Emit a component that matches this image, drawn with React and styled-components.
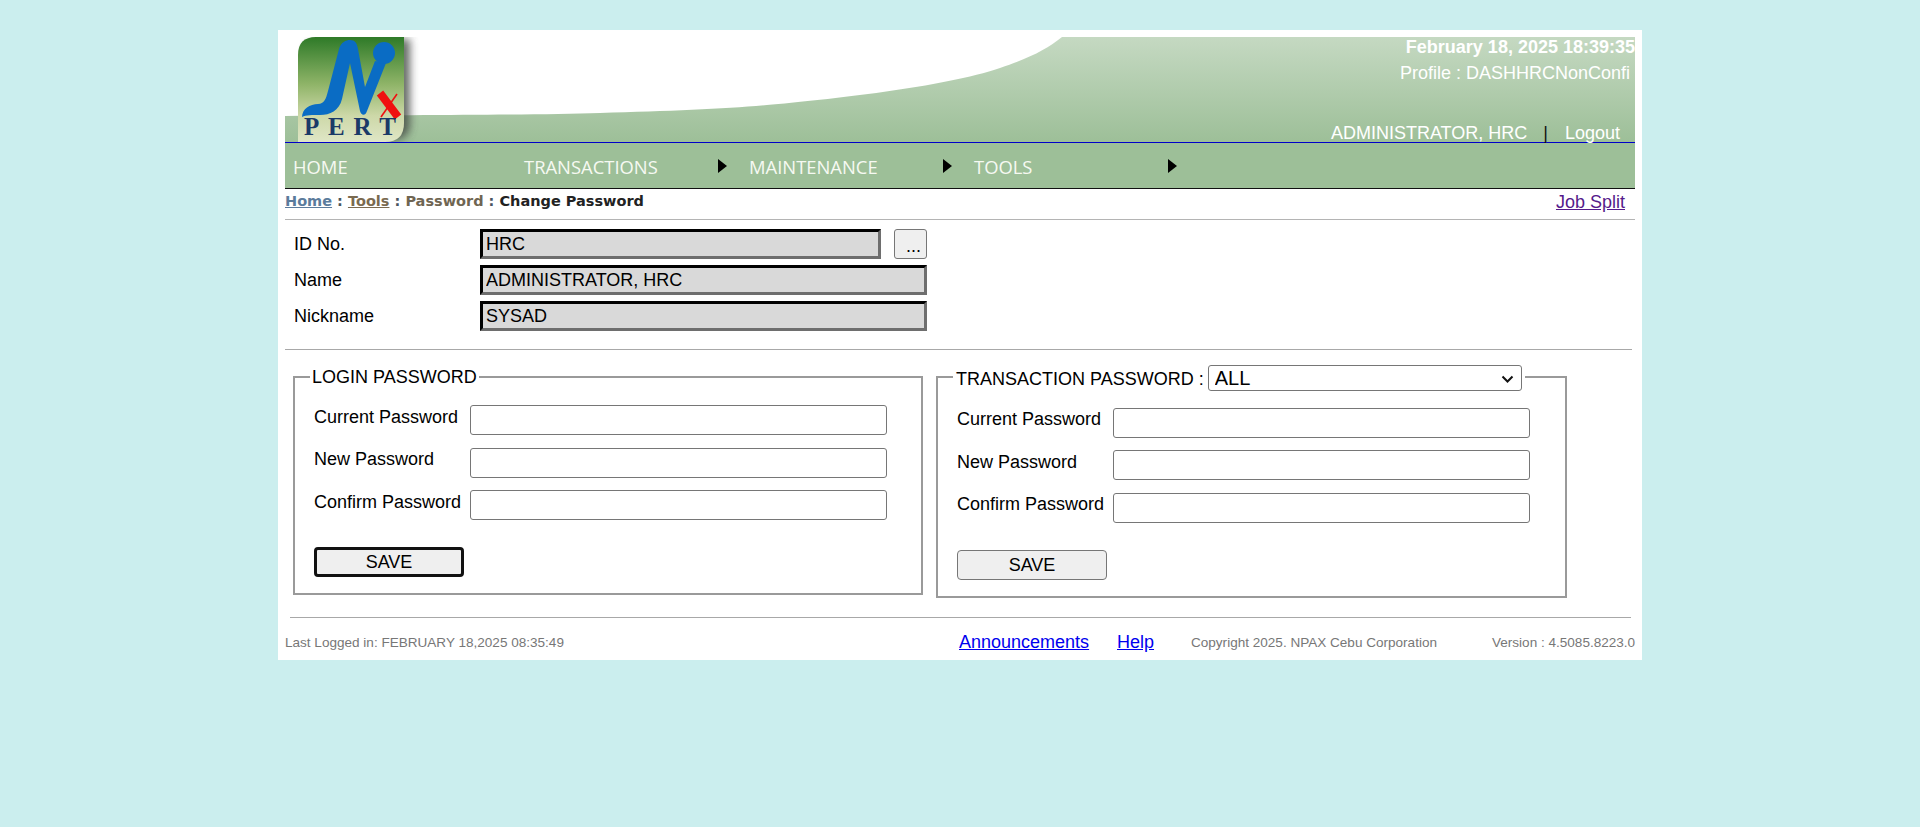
import React from "react";
import styled, { createGlobalStyle } from "styled-components";

const Global = createGlobalStyle`
  html, body { margin: 0; padding: 0; background: #cbeeee; }
  body { font-family: "Liberation Sans", Arial, sans-serif; font-size: 18px; color: #000; }
  * { box-sizing: border-box; }
`;

const Page = styled.div`
  min-height: 827px;
  padding-top: 30px;
`;
const Shell = styled.main`
  width: 1364px;
  height: 630px;
  margin: 0 auto;
  padding: 7px 7px 0;
  background: #fff;
`;
const Header = styled.header`
  position: relative;
  display: flex;
  justify-content: space-between;
  height: 106px;
  border-bottom: 1px solid #0000c8;
`;
const BannerArt = styled.svg`
  position: absolute;
  inset: 0;
  width: 1350px;
  height: 105px;
`;
const LogoMark = styled.svg`
  position: relative;
  width: 130px;
  height: 105px;
  margin-left: 13px;
  flex: none;
`;
const Session = styled.div`
  position: relative;
  display: flex;
  flex-direction: column;
  align-items: flex-end;
  color: #fff;
  line-height: 20px;
  white-space: nowrap;
`;
const Clock = styled.div`
  font-weight: 700;
`;
const Profile = styled.div`
  margin-top: 6px;
  padding-right: 5px;
`;
const UserLine = styled.div`
  display: flex;
  margin-top: 40px;
  padding-right: 15px;
`;
const Divider = styled.span`
  margin: 0 17px 0 16px;
  color: #111;
`;
const Nav = styled.nav`
  display: flex;
  height: 46px;
  padding: 1px 0 0 8px;
  background: #9dbf98;
  border-bottom: 1px solid #111;
  font-family: "Open Sans", sans-serif;
  font-size: 18.4px;
  color: #f6f9f2;
`;
const NavItem = styled.div`
  position: relative;
  display: flex;
  align-items: center;
  width: ${(p) => p.$width}px;
`;
const NavArrow = styled.span`
  position: absolute;
  left: 194px;
  top: 15px;
  width: 0;
  height: 0;
  border-left: 9px solid #000;
  border-top: 7.5px solid transparent;
  border-bottom: 7.5px solid transparent;
`;
const CrumbBar = styled.div`
  display: flex;
  justify-content: space-between;
  align-items: flex-start;
  height: 31px;
  border-bottom: 1px solid #b4b4b4;
`;
const Crumbs = styled.div`
  padding-top: 4px;
  font-family: "DejaVu Sans", Verdana, sans-serif;
  font-size: 14.5px;
  font-weight: 700;
  line-height: 17px;
  color: #4a5560;
`;
const Crumb = styled.span`
  color: ${(p) => p.$color};
  text-decoration: ${(p) => (p.$link ? "underline" : "none")};
`;
const SplitLink = styled.a`
  margin: 3px 10px 0 0;
  color: #551a8b;
  line-height: 20px;
  text-decoration: underline;
`;
const IdBlock = styled.section`
  display: grid;
  grid-template-columns: 186px max-content max-content;
  grid-auto-rows: 30px;
  row-gap: 6px;
  align-items: center;
  margin: 9px 0 0 9px;
`;
const FieldLabel = styled.label`
  line-height: 20px;
`;
const LockedInput = styled.input`
  width: ${(p) => p.$width}px;
  height: 30px;
  padding: 0 3px;
  grid-column: ${(p) => (p.$wide ? "2 / span 2" : "2")};
  border: 3px inset #777;
  border-color: #222 #6e6e6e #6e6e6e #222;
  border-radius: 0;
  background: #d9d9d9;
  font: 18px "Liberation Sans", sans-serif;
  color: #000;
  outline: none;
`;
const LookupButton = styled.button`
  width: 33px;
  height: 30px;
  margin-left: 13px;
  padding: 4px 0 0 6px;
  border: 1px solid #767676;
  border-radius: 3px;
  background: #efefef;
  font: 18px "Liberation Sans", sans-serif;
  color: #000;
`;
const Rule = styled.hr`
  width: ${(p) => p.$width}px;
  height: 1px;
  margin: ${(p) => p.$margin};
  border: 0;
  background: #a8a8a8;
`;
const Panels = styled.div`
  display: flex;
  align-items: flex-start;
  gap: 13px;
  margin: 15px 0 0 8px;
`;
const Panel = styled.fieldset`
  width: ${(p) => p.$width}px;
  height: ${(p) => p.$height}px;
  margin: ${(p) => p.$top}px 0 0;
  padding: 0 14px 0 15px;
  border: 2px solid #9a9a9a;
  min-inline-size: 0;
`;
const PanelTitle = styled.legend`
  display: flex;
  align-items: flex-start;
  height: ${(p) => p.$height}px;
  padding: 0 ${(p) => p.$pad}px;
  line-height: ${(p) => p.$line}px;
  white-space: nowrap;
`;
const ScopeWrap = styled.span`
  position: relative;
  display: block;
  width: 314px;
  height: 26px;
  margin-left: 4px;
`;
const ScopeSelect = styled.select`
  display: block;
  width: 100%;
  height: 26px;
  padding: 0 0 0 6px;
  appearance: none;
  border: 1px solid #767676;
  border-radius: 3px;
  background: #fff;
  font: 20px "Liberation Sans", sans-serif;
  color: #000;
`;
const ScopeChevron = styled.svg`
  position: absolute;
  right: 8px;
  top: 10px;
  width: 13px;
  height: 8px;
  pointer-events: none;
`;
const PasswordRows = styled.div`
  display: flex;
  flex-direction: column;
  margin: ${(p) => p.$top}px 0 0 4px;
`;
const PasswordRow = styled.div`
  display: flex;
  margin-top: ${(p) => p.$gap}px;
`;
const PasswordLabel = styled.label`
  width: 156px;
  padding-top: ${(p) => p.$nudge}px;
  line-height: 20px;
  white-space: nowrap;
`;
const PasswordInput = styled.input`
  width: 417px;
  height: 30px;
  border: 1px solid #767676;
  border-radius: 3px;
  background: #fff;
  outline: none;
`;
const SaveButton = styled.button`
  display: block;
  width: ${(p) => p.$width}px;
  height: 30px;
  margin: 27px 0 0 4px;
  padding: 0;
  border: ${(p) => (p.$focused ? "3px solid #111" : "1px solid #767676")};
  border-radius: 4px;
  background: #efefef;
  font: 18px "Liberation Sans", sans-serif;
  color: #000;
`;
const Footer = styled.footer`
  display: grid;
  grid-template-columns: 674px 158px 74px 301px 1fr;
  align-items: center;
  height: 48px;
  font-size: 13.55px;
  color: #777;
  white-space: nowrap;
`;
const FooterLink = styled.a`
  font-size: 18px;
  color: #0000ee;
  text-decoration: underline;
`;
const Version = styled.span`
  text-align: right;
`;

const Banner = () => (
  <BannerArt viewBox="0 0 1350 105" preserveAspectRatio="none" aria-hidden="true">
    <defs>
      <linearGradient id="swoosh" x1="0" y1="0" x2="0" y2="1">
        <stop offset="0" stopColor="#c5d9c2" />
        <stop offset="1" stopColor="#9dbf98" />
      </linearGradient>
    </defs>
    <path
      d="M0 79 C 150 78 250 78 315 76 C 385 74 440 72 482 68 C 540 63 660 50 715 31 C 745 21 762 12 777 0 L1350 0 L1350 105 L0 105 Z"
      fill="url(#swoosh)"
    />
  </BannerArt>
);

const Logo = () => (
  <LogoMark viewBox="0 0 130 105" aria-label="NPERTx logo">
    <defs>
      <linearGradient id="tile" x1="0" y1="0" x2="0" y2="1">
        <stop offset="0" stopColor="#2e7a28" />
        <stop offset="0.45" stopColor="#8fb468" />
        <stop offset="0.75" stopColor="#cdd8a8" />
        <stop offset="1" stopColor="#dfe6c6" />
      </linearGradient>
      <filter id="soft" x="-20%" y="-20%" width="140%" height="140%">
        <feGaussianBlur stdDeviation="4" />
      </filter>
    </defs>
    <path d="M18 2 H112 V86 Q112 103 95 103 H8 V12 Z" fill="#3f443f" opacity="0.8" filter="url(#soft)" />
    <path d="M18 0 H106 V86 Q106 105 87 105 H0 V18 Q0 0 18 0 Z" fill="url(#tile)" />
    <path
      d="M4 80 C 4 72 12 67 20 67 C 26 67 28 62 30 54 L 41 12 C 43 5 48 3 52 3 C 57 3 59 6 60 12 L 67 50 L 77 24 L 88 26 L 69 74 C 67 80 63 78 62 74 L 52 26 L 44 62 C 41 74 32 78 22 78 C 14 78 8 78 4 80 Z"
      fill="#0a6cc4"
    />
    <circle cx="86" cy="16" r="11" fill="#0a6cc4" />
    <path d="M82 56 L100 80" stroke="#f01010" strokeWidth="8" />
    <path d="M99 57 L83 80" stroke="#f01010" strokeWidth="1.6" />
    <text
      x="6"
      y="98"
      textLength="92"
      lengthAdjust="spacing"
      fontFamily="Liberation Serif, serif"
      fontSize="25"
      fontWeight="700"
      fill="#1b3a68"
    >
      PERT
    </text>
  </LogoMark>
);

const passwordLabels = ["Current Password", "New Password", "Confirm Password"];

const PasswordFields = ({ gaps, top, nudges }) => (
  <PasswordRows $top={top}>
    {passwordLabels.map((label, i) => (
      <PasswordRow key={label} $gap={gaps[i]}>
        <PasswordLabel $nudge={nudges[i]}>{label}</PasswordLabel>
        <PasswordInput type="password" />
      </PasswordRow>
    ))}
  </PasswordRows>
);

export default function App() {
  return (
    <Page>
      <Global />
      <Shell>
        <Header>
          <Banner />
          <Logo />
          <Session>
            <Clock>February 18, 2025 18:39:35</Clock>
            <Profile>Profile : DASHHRCNonConfi</Profile>
            <UserLine>
              ADMINISTRATOR, HRC
              <Divider>|</Divider>
              Logout
            </UserLine>
          </Session>
        </Header>
        <Nav>
          <NavItem $width={231}>HOME</NavItem>
          <NavItem $width={225}>TRANSACTIONS<NavArrow /></NavItem>
          <NavItem $width={225}>MAINTENANCE<NavArrow /></NavItem>
          <NavItem $width={225}>TOOLS<NavArrow /></NavItem>
        </Nav>
        <CrumbBar>
          <Crumbs>
            <Crumb $link $color="#5b7b9c">Home</Crumb> : <Crumb $link $color="#7a6a50">Tools</Crumb> :{" "}
            <Crumb $color="#6f6552">Password</Crumb> : <Crumb $color="#222">Change Password</Crumb>
          </Crumbs>
          <SplitLink href="#">Job Split</SplitLink>
        </CrumbBar>
        <IdBlock>
          <FieldLabel>ID No.</FieldLabel>
          <LockedInput $width={401} readOnly value="HRC" />
          <LookupButton>...</LookupButton>
          <FieldLabel>Name</FieldLabel>
          <LockedInput $width={447} $wide readOnly value="ADMINISTRATOR, HRC" />
          <FieldLabel>Nickname</FieldLabel>
          <LockedInput $width={447} $wide readOnly value="SYSAD" />
        </IdBlock>
        <Rule $width={1347} $margin="18px 0 0" />
        <Panels>
          <Panel $width={630} $height={229} $top={1}>
            <PanelTitle $pad={2} $height={22} $line={22}>LOGIN PASSWORD</PanelTitle>
            <PasswordFields top={17} gaps={[0, 13, 12]} nudges={[2, 1, 2]} />
            <SaveButton $width={150} $focused>SAVE</SaveButton>
          </Panel>
          <Panel $width={631} $height={233} $top={0}>
            <PanelTitle $pad={3} $height={24} $line={28}>
              TRANSACTION PASSWORD :
              <ScopeWrap>
                <ScopeSelect defaultValue="ALL">
                  <option>ALL</option>
                </ScopeSelect>
                <ScopeChevron viewBox="0 0 13 8" aria-hidden="true">
                  <path d="M1.5 1.5 L6.5 6.5 L11.5 1.5" fill="none" stroke="#111" strokeWidth="2" />
                </ScopeChevron>
              </ScopeWrap>
            </PanelTitle>
            <PasswordFields top={19} gaps={[0, 12, 13]} nudges={[1, 2, 1]} />
            <SaveButton $width={150}>SAVE</SaveButton>
          </Panel>
        </Panels>
        <Rule $width={1341} $margin="19px 0 0 5px" />
        <Footer>
          <span>Last Logged in: FEBRUARY 18,2025 08:35:49</span>
          <span><FooterLink href="#">Announcements</FooterLink></span>
          <span><FooterLink href="#">Help</FooterLink></span>
          <span>Copyright 2025. NPAX Cebu Corporation</span>
          <Version>Version : 4.5085.8223.0</Version>
        </Footer>
      </Shell>
    </Page>
  );
}
